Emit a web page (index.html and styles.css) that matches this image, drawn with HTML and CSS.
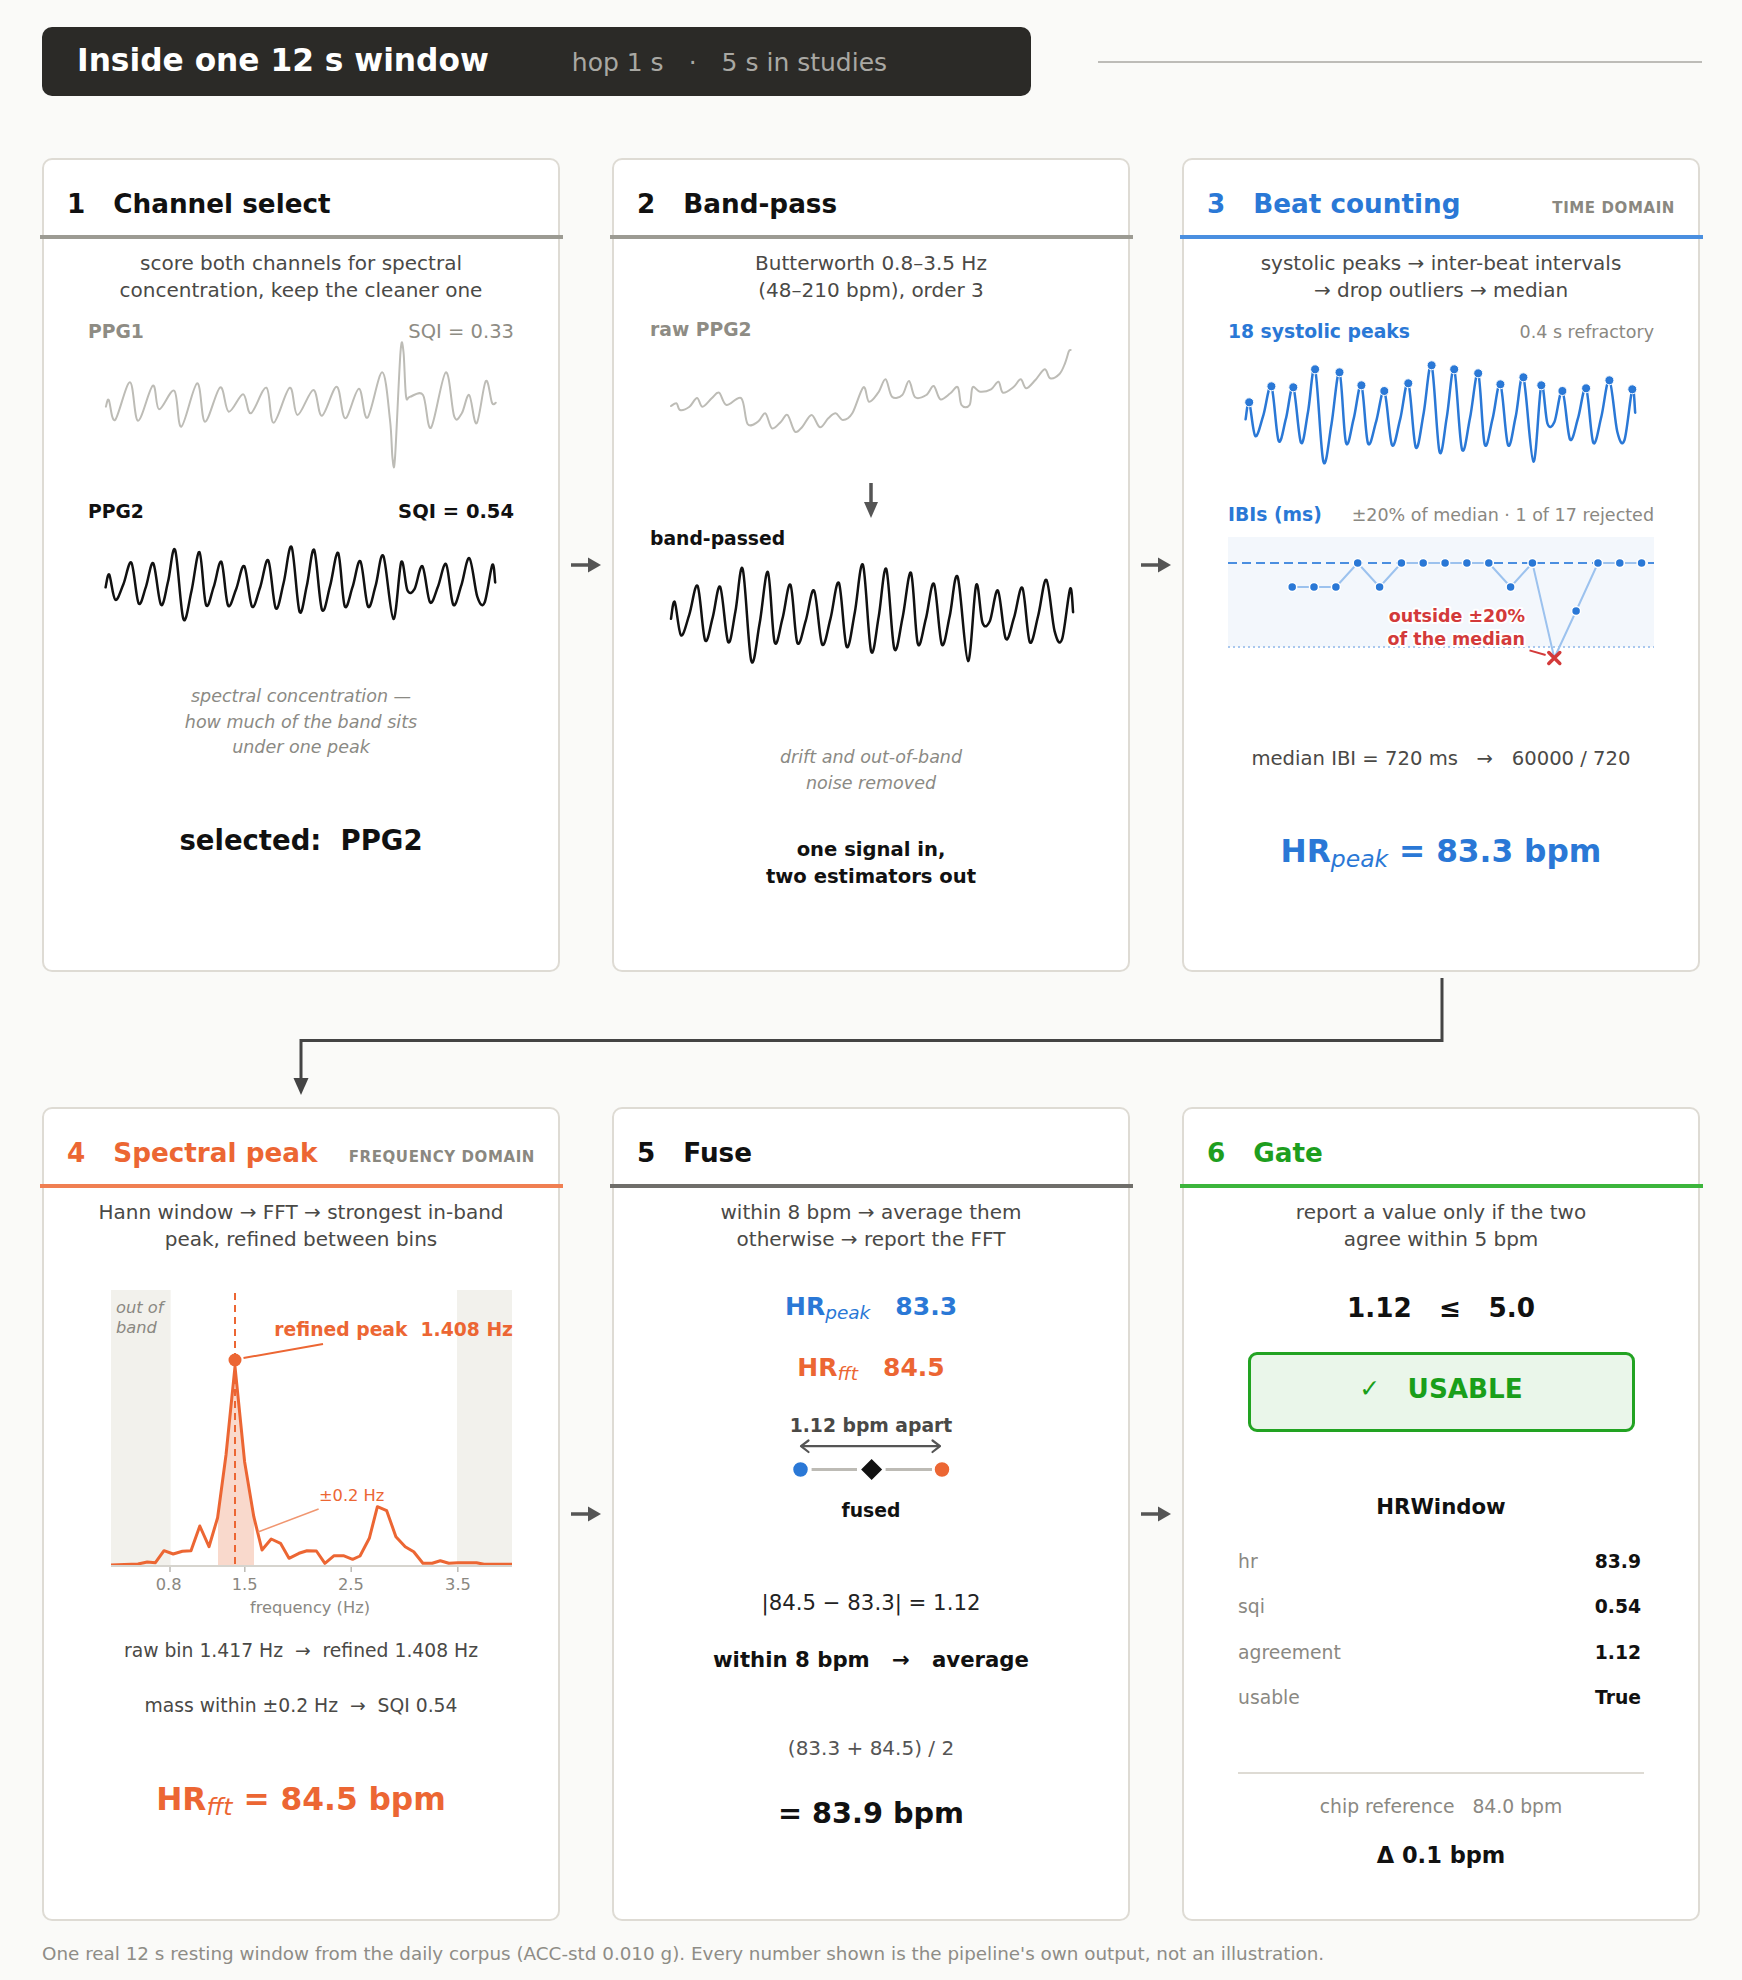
FILE: index.html
```html
<!DOCTYPE html>
<html lang="en">
<head>
<meta charset="utf-8">
<title>Inside one 12 s window</title>
<link rel="stylesheet" href="styles.css">
</head>
<body>
<header class="top">
  <div class="bar">
    <h1 class="title">Inside one 12 s window</h1>
    <span class="sub">hop 1 s<span class="dot">·</span>5 s in studies</span>
  </div>
  <div class="top-line"></div>
</header>

<section class="row row-1">
  <article class="card">
    <div class="head"><span class="num">1</span><span class="name">Channel select</span></div>
    <div class="rule rule-gray"></div>
    <div class="body">
      <p class="desc">score both channels for spectral<br>concentration, keep the cleaner one</p>
      <div class="chan chan-top"><span class="lbl muted">PPG1</span><span class="sqi muted">SQI = 0.33</span></div>
      <svg class="plot" width="426" height="158" viewBox="0 0 426 158"><path id="w-ppg1" class="wave-gray"/></svg>
      <div class="chan"><span class="lbl">PPG2</span><span class="sqi strong">SQI = 0.54</span></div>
      <svg class="plot" width="426" height="161" viewBox="0 0 426 161"><path id="w-ppg2" class="wave-black"/></svg>
      <p class="note">spectral concentration —<br>how much of the band sits<br>under one peak</p>
      <p class="verdict">selected:  PPG2</p>
    </div>
  </article>

  <div class="flow"><svg width="30" height="18" viewBox="0 0 30 18"><line x1="0" y1="9" x2="19" y2="9" class="arr-line"/><polygon points="17,1.5 30,9 17,16.5" class="arr-head"/></svg></div>

  <article class="card">
    <div class="head"><span class="num">2</span><span class="name">Band-pass</span></div>
    <div class="rule rule-gray"></div>
    <div class="body">
      <p class="desc">Butterworth 0.8–3.5 Hz<br>(48–210 bpm), order 3</p>
      <div class="chan chan-raw"><span class="lbl muted">raw PPG2</span></div>
      <svg class="plot" width="426" height="187" viewBox="0 0 426 187">
        <path id="w-raw" class="wave-gray"/>
        <line x1="213" y1="142" x2="213" y2="164" class="arr-line"/>
        <polygon points="206,161 220,161 213,177" class="arr-head"/>
      </svg>
      <div class="chan chan-bp"><span class="lbl">band-passed</span></div>
      <svg class="plot" width="426" height="194" viewBox="0 0 426 194"><path id="w-bp" class="wave-black"/></svg>
      <p class="note note-2">drift and out-of-band<br>noise removed</p>
      <p class="bold-pair">one signal in,<br>two estimators out</p>
    </div>
  </article>

  <div class="flow"><svg width="30" height="18" viewBox="0 0 30 18"><line x1="0" y1="9" x2="19" y2="9" class="arr-line"/><polygon points="17,1.5 30,9 17,16.5" class="arr-head"/></svg></div>

  <article class="card card-blue">
    <div class="head"><span class="num">3</span><span class="name">Beat counting</span><span class="tag">TIME DOMAIN</span></div>
    <div class="rule rule-blue"></div>
    <div class="body">
      <p class="desc">systolic peaks → inter-beat intervals<br>→ drop outliers → median</p>
      <div class="chan chan-top"><span class="lbl blue">18 systolic peaks</span><span class="meta">0.4 s refractory</span></div>
      <svg class="plot" width="426" height="161" viewBox="0 0 426 161">
        <path id="w-blue" class="wave-blue"/>
        <g class="peak-dots">
          <circle cx="21.2" cy="59.3" r="4.5"/><circle cx="43.4" cy="43.3" r="4.5"/><circle cx="65.3" cy="44.3" r="4.5"/>
          <circle cx="87.1" cy="26.3" r="4.5"/><circle cx="111.5" cy="29.3" r="4.5"/><circle cx="133.4" cy="42.3" r="4.5"/>
          <circle cx="156.3" cy="48" r="4.5"/><circle cx="180.3" cy="40.3" r="4.5"/><circle cx="203.6" cy="22.3" r="4.5"/>
          <circle cx="226.2" cy="26.3" r="4.5"/><circle cx="250.2" cy="30.3" r="4.5"/><circle cx="272.4" cy="41.3" r="4.5"/>
          <circle cx="295.4" cy="34.3" r="4.5"/><circle cx="313.3" cy="42.3" r="4.5"/><circle cx="334.4" cy="48" r="4.5"/>
          <circle cx="358.1" cy="45.3" r="4.5"/><circle cx="381.4" cy="37.3" r="4.5"/><circle cx="404.3" cy="46.3" r="4.5"/>
        </g>
      </svg>
      <div class="chan"><span class="lbl blue">IBIs (ms)</span><span class="meta-wide">±20% of median · 1 of 17 rejected</span></div>
      <svg class="plot" width="426" height="219" viewBox="0 0 426 219">
        <rect x="0" y="11" width="426" height="110" class="ibi-bg"/>
        <line x1="0" y1="121" x2="426" y2="121" class="ibi-floor"/>
        <line x1="0" y1="37" x2="426" y2="37" class="ibi-median"/>
        <polyline class="ibi-line" points="64.2,61 86,61 107.9,61 129.7,37 151.6,61 173.4,37 195.2,37 217.1,37 238.9,37 260.8,37 282.6,61 304.4,37 326.3,132 348.1,85 370,37 391.8,37 413.6,37"/>
        <g class="ibi-dots">
          <circle cx="64.2" cy="61" r="4.5"/><circle cx="86" cy="61" r="4.5"/><circle cx="107.9" cy="61" r="4.5"/>
          <circle cx="129.7" cy="37" r="4.5"/><circle cx="151.6" cy="61" r="4.5"/><circle cx="173.4" cy="37" r="4.5"/>
          <circle cx="195.2" cy="37" r="4.5"/><circle cx="217.1" cy="37" r="4.5"/><circle cx="238.9" cy="37" r="4.5"/>
          <circle cx="260.8" cy="37" r="4.5"/><circle cx="282.6" cy="61" r="4.5"/><circle cx="304.4" cy="37" r="4.5"/>
          <circle cx="348.1" cy="85" r="4.5"/><circle cx="370" cy="37" r="4.5"/><circle cx="391.8" cy="37" r="4.5"/>
          <circle cx="413.6" cy="37" r="4.5"/>
        </g>
        <text x="297" y="96" class="t-red">outside ±20%</text>
        <text x="297" y="119" class="t-red">of the median</text>
        <line x1="301.5" y1="124.4" x2="317.6" y2="129" class="red-line"/>
        <path d="M320.8 126.5 L331.8 137.5 M331.8 126.5 L320.8 137.5" class="red-x"/>
      </svg>
      <p class="formula">median IBI = 720 ms   →   60000 / 720</p>
      <p class="hr hr-peak">HR<sub>peak</sub> = 83.3 bpm</p>
    </div>
  </article>
</section>

<svg class="connector" width="1742" height="135" viewBox="0 0 1742 135">
  <path d="M1442 6 V68.5 H301 V108" class="conn-line"/>
  <polygon points="293.5,106 308.5,106 301,123" class="conn-head"/>
</svg>

<section class="row">
  <article class="card card-orange">
    <div class="head"><span class="num">4</span><span class="name">Spectral peak</span><span class="tag">FREQUENCY DOMAIN</span></div>
    <div class="rule rule-orange"></div>
    <div class="body">
      <p class="desc">Hann window → FFT → strongest in-band<br>peak, refined between bins</p>
      <svg class="plot" width="426" height="386" viewBox="0 0 426 386">
        <defs>
          <clipPath id="under">
            <polygon points="23,312 50,311 59.3,309 67.4,309.7 76,297.7 85.2,301 94.4,298.3 103,297.7 111.8,273 121,293.7 129.6,264.7 138,202 147,113.7 156.6,208.7 165.8,263.7 174,297 183.2,286 192.5,290.3 201,305.3 211,300.3 219,297.7 228.4,298 236.9,310.3 246.1,302.7 255.4,302.7 264.6,306.3 272,303 281.3,285.3 289.4,253.7 298.7,257.7 307.9,283.7 317.2,293.7 325.7,298.7 334.9,310.3 344.2,310.3 352.3,307.7 360.8,310.3 370,309.7 388.5,309.7 396,311.3 424,311.3 424,313 23,313"/>
          </clipPath>
        </defs>
        <rect x="23" y="37" width="59.6" height="276" class="oob"/>
        <rect x="369" y="37" width="55" height="276" class="oob"/>
        <text x="28" y="60" class="t-out">out of</text>
        <text x="28" y="80" class="t-out">band</text>
        <rect x="130" y="0" width="36" height="313" class="band" clip-path="url(#under)"/>
        <line x1="147" y1="40" x2="147" y2="313" class="peak-dash"/>
        <polyline class="spec" points="23,312 50,311 59.3,309 67.4,309.7 76,297.7 85.2,301 94.4,298.3 103,297.7 111.8,273 121,293.7 129.6,264.7 138,202 147,113.7 156.6,208.7 165.8,263.7 174,297 183.2,286 192.5,290.3 201,305.3 211,300.3 219,297.7 228.4,298 236.9,310.3 246.1,302.7 255.4,302.7 264.6,306.3 272,303 281.3,285.3 289.4,253.7 298.7,257.7 307.9,283.7 317.2,293.7 325.7,298.7 334.9,310.3 344.2,310.3 352.3,307.7 360.8,310.3 370,309.7 388.5,309.7 396,311.3 424,311.3"/>
        <line x1="23" y1="313" x2="424" y2="313" class="axis"/>
        <line x1="82" y1="314" x2="82" y2="319" class="tick"/>
        <line x1="156.8" y1="314" x2="156.8" y2="319" class="tick"/>
        <line x1="263.2" y1="314" x2="263.2" y2="319" class="tick"/>
        <line x1="369.8" y1="314" x2="369.8" y2="319" class="tick"/>
        <text x="80.7" y="337" class="t-tick">0.8</text>
        <text x="156.6" y="337" class="t-tick">1.5</text>
        <text x="262.8" y="337" class="t-tick">2.5</text>
        <text x="370" y="337" class="t-tick">3.5</text>
        <text x="222" y="360" class="t-tick">frequency (Hz)</text>
        <circle cx="147" cy="107" r="6.5" class="peak-dot"/>
        <line x1="155.5" y1="105" x2="235" y2="91" class="lead"/>
        <text x="425" y="83" class="t-peak" xml:space="preserve">refined peak  1.408 Hz</text>
        <text x="231" y="248" class="t-band">±0.2 Hz</text>
        <line x1="230.6" y1="256" x2="170" y2="279" class="lead-light"/>
      </svg>
      <p class="calc">raw bin 1.417 Hz  →  refined 1.408 Hz</p>
      <p class="calc calc-2">mass within ±0.2 Hz  →  SQI 0.54</p>
      <p class="hr hr-fft">HR<sub>fft</sub> = 84.5 bpm</p>
    </div>
  </article>

  <div class="flow"><svg width="30" height="18" viewBox="0 0 30 18"><line x1="0" y1="9" x2="19" y2="9" class="arr-line"/><polygon points="17,1.5 30,9 17,16.5" class="arr-head"/></svg></div>

  <article class="card">
    <div class="head"><span class="num">5</span><span class="name">Fuse</span></div>
    <div class="rule rule-dark"></div>
    <div class="body">
      <p class="desc">within 8 bpm → average them<br>otherwise → report the FFT</p>
      <p class="est est-peak">HR<sub>peak</sub><span class="ev">83.3</span></p>
      <p class="est est-fft">HR<sub>fft</sub><span class="ev">84.5</span></p>
      <p class="apart">1.12 bpm apart</p>
      <svg class="plot" width="426" height="63" viewBox="0 0 426 63">
        <line x1="143.5" y1="9.2" x2="281.5" y2="9.2" class="dbl"/>
        <path d="M150.5 3.5 L143 9.2 L150.5 15 M274.5 3.5 L282 9.2 L274.5 15" class="dbl"/>
        <line x1="153.6" y1="32.5" x2="199" y2="32.5" class="link"/>
        <line x1="227.6" y1="32.5" x2="274" y2="32.5" class="link"/>
        <circle cx="142.5" cy="32.5" r="8" class="dot-blue"/>
        <circle cx="284" cy="32.5" r="8" class="dot-orange"/>
        <polygon points="213.6,22 224.1,32.5 213.6,43 203.1,32.5" class="diamond"/>
      </svg>
      <p class="fused">fused</p>
      <p class="diff">|84.5 − 83.3| = 1.12</p>
      <p class="decide">within 8 bpm   →   average</p>
      <p class="paren">(83.3 + 84.5) / 2</p>
      <p class="final">= 83.9 bpm</p>
    </div>
  </article>

  <div class="flow"><svg width="30" height="18" viewBox="0 0 30 18"><line x1="0" y1="9" x2="19" y2="9" class="arr-line"/><polygon points="17,1.5 30,9 17,16.5" class="arr-head"/></svg></div>

  <article class="card card-green">
    <div class="head"><span class="num">6</span><span class="name">Gate</span></div>
    <div class="rule rule-green"></div>
    <div class="body">
      <p class="desc">report a value only if the two<br>agree within 5 bpm</p>
      <p class="cmp">1.12   ≤   5.0</p>
      <div class="usable"><span class="check">✓</span>   USABLE</div>
      <p class="objname">HRWindow</p>
      <div class="kv">
        <div class="kv-row"><span class="k">hr</span><span class="v">83.9</span></div>
        <div class="kv-row"><span class="k">sqi</span><span class="v">0.54</span></div>
        <div class="kv-row"><span class="k">agreement</span><span class="v">1.12</span></div>
        <div class="kv-row"><span class="k">usable</span><span class="v">True</span></div>
      </div>
      <div class="sep"></div>
      <p class="chip">chip reference   84.0 bpm</p>
      <p class="delta">Δ 0.1 bpm</p>
    </div>
  </article>
</section>

<p class="foot">One real 12 s resting window from the daily corpus (ACC-std 0.010 g). Every number shown is the pipeline's own output, not an illustration.</p>

<script src="script.js"></script>
</body>
</html>
```

FILE: styles.css
```css
* { margin: 0; padding: 0; box-sizing: border-box; }
html, body { background: #fafaf8; }
body {
  width: 1742px;
  height: 1980px;
  overflow: hidden;
  font-family: "DejaVu Sans", Verdana, sans-serif;
  color: #111;
}

/* top banner */
.top { display: flex; align-items: center; padding: 27px 40px 0 42px; }
.bar {
  flex: none;
  width: 989px;
  height: 69px;
  background: #2b2a27;
  border-radius: 10px;
  display: flex;
  align-items: baseline;
  padding: 15px 0 0 35px;
}
.title { font-size: 31.25px; line-height: 36px; font-weight: bold; color: #fff; white-space: nowrap; }
.sub { font-size: 25px; line-height: 36px; color: #a9a8a3; margin-left: 83px; white-space: nowrap; }
.dot { margin: 0 25px; }
.top-line { flex: 1; height: 2px; background: #bdbcb8; margin-left: 67px; }

/* rows */
.row { display: grid; grid-template-columns: 518px 52px 518px 52px 518px; padding-left: 42px; }
.row-1 { margin-top: 62px; }
.flow { display: flex; align-items: center; justify-content: center; }
.arr-line { stroke: #555; stroke-width: 3.5; }
.arr-head { fill: #555; }

.connector { display: block; }
.conn-line { fill: none; stroke: #444; stroke-width: 3; stroke-linejoin: miter; }
.conn-head { fill: #444; }

/* card */
.card {
  height: 814px;
  background: #fff;
  border: 2px solid #dedbd4;
  border-radius: 10px;
  display: flex;
  flex-direction: column;
}
.head {
  flex: none;
  height: 75px;
  padding: 28.5px 23px 0;
  display: flex;
  align-items: baseline;
  line-height: 30px;
  font-weight: bold;
}
.num, .name { font-size: 26.25px; }
.name { margin-left: 28px; }
.tag { margin-left: auto; font-size: 15px; letter-spacing: 0.6px; color: #8a8880; }
.card-blue .num, .card-blue .name { color: #2a78d6; }
.card-orange .num, .card-orange .name { color: #ec6633; }
.card-green .num, .card-green .name { color: #1e9e1e; }

.rule { flex: none; height: 4px; margin: 0 -5px 0 -4px; }
.rule-gray { background: #9c9b93; }
.rule-blue { background: #4a8fe0; }
.rule-orange { background: #f07f52; }
.rule-dark { background: #6f6e6a; }
.rule-green { background: #3cb53c; }

.body { padding: 0 44px; text-align: center; }
.desc { margin-top: 11px; font-size: 20px; line-height: 27px; color: #4a4946; }

.chan { display: flex; justify-content: space-between; align-items: baseline; line-height: 22px; text-align: left; }
.chan-top { margin-top: 17px; }
.chan-raw { margin-top: 15px; margin-left: -8px; }
.chan-bp { margin-left: -8px; }
.lbl { font-size: 18.75px; font-weight: bold; white-space: nowrap; }
.lbl.muted, .sqi.muted { color: #8e8c84; }
.lbl.blue { color: #2a78d6; }
.sqi { font-size: 19.5px; white-space: nowrap; }
.sqi.strong { font-weight: bold; }
.meta { font-size: 17.5px; color: #8a8882; }
.meta-wide { font-size: 17.5px; color: #8a8882; white-space: nowrap; }

.plot { display: block; overflow: visible; }
.wave-gray { fill: none; stroke: #bdbcb6; stroke-width: 2; stroke-linejoin: round; stroke-linecap: round; }
.wave-black { fill: none; stroke: #111; stroke-width: 2.5; stroke-linejoin: round; stroke-linecap: round; }
.wave-blue { fill: none; stroke: #2a78d6; stroke-width: 2.5; stroke-linejoin: round; stroke-linecap: round; }
.peak-dots circle { fill: #2a78d6; stroke: #fff; stroke-width: 1; }

.note { font-style: italic; font-size: 17.5px; line-height: 25.5px; color: #8b8a84; }
.note-2 { line-height: 26px; }
.verdict { margin-top: 63.5px; font-size: 27.5px; line-height: 32px; font-weight: bold; white-space: pre; }
.bold-pair { margin-top: 40px; font-size: 19.6px; line-height: 27px; font-weight: bold; }

/* IBI chart */
.ibi-bg { fill: #f3f7fc; }
.ibi-floor { stroke: #a9c8ee; stroke-width: 2; stroke-dasharray: 2 3; }
.ibi-median { stroke: #4a8ee0; stroke-width: 2; stroke-dasharray: 9 5; }
.ibi-line { fill: none; stroke: #9cc2ee; stroke-width: 2; stroke-linejoin: round; }
.ibi-dots circle { fill: #2a78d6; stroke: #fff; stroke-width: 1.5; }
.t-red {
  font-size: 17.5px;
  font-weight: bold;
  fill: #d33a3a;
  text-anchor: end;
  stroke: #fff;
  stroke-width: 4px;
  stroke-linejoin: round;
  paint-order: stroke;
}
.red-line { stroke: #d33a3a; stroke-width: 2; }
.red-x { fill: none; stroke: #d33a3a; stroke-width: 3.5; stroke-linecap: round; }

.formula { font-size: 19.6px; line-height: 27px; color: #4a4946; white-space: pre; }
.hr { font-size: 31.25px; line-height: 36px; font-weight: bold; white-space: nowrap; }
.hr sub { font-size: 23.5px; font-style: italic; font-weight: normal; vertical-align: -5px; line-height: 0; }
.hr-peak { margin-top: 61px; color: #2a78d6; }
.hr-fft { margin-top: 63px; color: #ec6633; }

/* spectrum */
.oob { fill: #f2f1ec; }
.band { fill: #f9d9cc; }
.peak-dash { stroke: #ec6633; stroke-width: 2; stroke-dasharray: 7 5; }
.spec { fill: none; stroke: #ec6633; stroke-width: 3; stroke-linejoin: round; }
.axis { stroke: #d6d4ce; stroke-width: 2; }
.tick { stroke: #bcbab4; stroke-width: 1.5; }
.t-tick { font-size: 16.25px; fill: #8a8882; text-anchor: middle; }
.t-out { font-size: 16.25px; font-style: italic; fill: #8a8882; }
.t-peak { font-size: 18.75px; font-weight: bold; fill: #ec6633; text-anchor: end; white-space: pre; }
.t-band { font-size: 16.25px; fill: #ec6633; }
.peak-dot { fill: #ec6633; }
.lead { stroke: #ec6633; stroke-width: 2; }
.lead-light { stroke: #f09670; stroke-width: 1.5; }

.calc { font-size: 18.75px; line-height: 24px; color: #4a4946; white-space: pre; }
.calc-2 { margin-top: 31px; }

/* fuse */
.est { font-size: 25px; line-height: 30px; font-weight: bold; white-space: nowrap; }
.est sub { font-size: 18.5px; font-style: italic; font-weight: normal; vertical-align: -4px; line-height: 0; }
.est .ev { margin-left: 25px; }
.est-peak { margin-top: 38.8px; color: #2a78d6; }
.est-fft { margin-top: 31.7px; color: #ec6633; }
.apart { margin-top: 32px; font-size: 18.75px; line-height: 22px; font-weight: bold; color: #4a4946; }
.dbl { fill: none; stroke: #555; stroke-width: 2.2; stroke-linecap: round; stroke-linejoin: round; }
.link { stroke: #bdbbb5; stroke-width: 3; }
.dot-blue { fill: #2a78d6; stroke: #fff; stroke-width: 1.5; }
.dot-orange { fill: #ec6633; stroke: #fff; stroke-width: 1.5; }
.diamond { fill: #111; }
.fused { font-size: 18.75px; line-height: 22px; font-weight: bold; }
.diff { margin-top: 66.7px; font-size: 21.25px; line-height: 27px; color: #222; }
.decide { margin-top: 30px; font-size: 21.25px; line-height: 27px; font-weight: bold; white-space: pre; }
.paren { margin-top: 62.9px; font-size: 20px; line-height: 24px; color: #555; }
.final { margin-top: 35.6px; font-size: 28.75px; line-height: 34px; font-weight: bold; }

/* gate */
.cmp { margin-top: 39.2px; font-size: 26.25px; line-height: 32px; font-weight: bold; white-space: pre; }
.usable {
  margin: 28px auto 0;
  width: 387px;
  height: 79.4px;
  border: 3px solid #22a322;
  border-radius: 9px;
  background: #eaf6ea;
  display: flex;
  align-items: center;
  justify-content: center;
  padding-bottom: 6px;
  color: #1a9f1a;
  font-size: 26.25px;
  line-height: 32px;
  font-weight: bold;
  white-space: pre;
}
.check { font-size: 25px; font-weight: normal; }
.objname { margin-top: 62.3px; font-size: 21.25px; line-height: 26px; font-weight: bold; }
.kv { margin: 19.2px 13px 0 10px; }
.kv-row { display: flex; justify-content: space-between; height: 45.3px; line-height: 45.3px; font-size: 18.75px; }
.kv-row .k { color: #8a8882; }
.kv-row .v { font-weight: bold; }
.sep { height: 2px; background: #dedbd4; margin: 52px 10px 0; }
.chip { margin-top: 20.5px; font-size: 18.75px; line-height: 24px; color: #8a8882; white-space: pre; }
.delta { margin-top: 22px; font-size: 22.5px; line-height: 28px; font-weight: bold; }

.foot { margin-top: 22px; padding-left: 42px; font-size: 18.33px; line-height: 22px; color: #8e8c86; white-space: nowrap; }
```

FILE: script.js
```js
(function () {
  function fmt(v) { return v.toFixed(1); }
  function smooth(pts) {
    var d = 'M' + fmt(pts[0][0]) + ' ' + fmt(pts[0][1]);
    for (var i = 0; i < pts.length - 1; i++) {
      var p0 = pts[i > 0 ? i - 1 : i];
      var p1 = pts[i];
      var p2 = pts[i + 1];
      var p3 = pts[i + 2 < pts.length ? i + 2 : i + 1];
      var c1x = p1[0] + (p2[0] - p0[0]) / 6, c1y = p1[1] + (p2[1] - p0[1]) / 6;
      var c2x = p2[0] - (p3[0] - p1[0]) / 6, c2y = p2[1] - (p3[1] - p1[1]) / 6;
      d += ' C' + [c1x, c1y, c2x, c2y, p2[0], p2[1]].map(fmt).join(' ');
    }
    return d;
  }
  function set(id, pts) {
    var el = document.getElementById(id);
    if (el) el.setAttribute('d', smooth(pts));
  }

  var peaks = [[21.2,59.3],[43.4,43.3],[65.3,44.3],[87.1,26.3],[111.5,29.3],[133.4,42.3],[156.3,48],[180.3,40.3],[203.6,22.3],[226.2,26.3],[250.2,30.3],[272.4,41.3],[295.4,34.3],[313.3,42.3],[334.4,48],[358.1,45.3],[381.4,37.3],[404.3,46.3]];
  var troughs = [[27.3,93],[50.6,97.7],[73,99.7],[95.4,118.7],[118,99.7],[140,100.3],[164,102],[187.8,104.3],[211.5,108.7],[234,106.3],[256.7,101.3],[280,102],[305.4,118.7],[319.4,80.3],[342,96.3],[365.3,99.7],[389.3,88.7]];

  var blue = [[17.6,76.3]];
  for (var i = 0; i < peaks.length; i++) {
    blue.push(peaks[i]);
    if (i < troughs.length) {
      var t = troughs[i], n = peaks[i + 1];
      blue.push(t);
      if (i === 13) { blue.push([326.5,78.7]); }
      else if (i === 16) { blue.push([396.5,97]); }
      else if (n[0] - t[0] > 10) { blue.push([t[0] + 0.5 * (n[0] - t[0]), t[1] - 0.42 * (t[1] - n[1])]); }
    }
  }
  blue.push([407.2,69.7]);

  set('w-blue', blue);
  set('w-ppg2', blue.map(function (p) { return [p[0], 24 + (p[1] - 22.3) * 0.747]; }));
  set('w-bp', blue.map(function (p) { return [13 + (p[0] - 17.6) * 1.032, 15 + (p[1] - 22.3) * 0.996]; }));

  set('w-ppg1', [[17.9,63.7],[20.8,57],[27.1,77],[41.9,39.3],[50,77.7],[64.8,42.7],[71.1,66.3],[86.3,47.7],[93.3,83.7],[109.2,40.3],[117,78.7],[132.2,44.3],[140.7,68.7],[155.1,51.3],[162.9,70.3],[178.4,44.7],[185.6,79.7],[201.7,44.7],[209.5,72],[225.4,47],[233.9,72.7],[248.7,43.7],[257.2,75.3],[270.9,45.7],[279.4,74.7],[294.2,29.3],[302,77],[304.5,115],[307,115],[312.5,9],[315.5,9],[318,53],[322,53.7],[335,52],[343,84.7],[357.8,29.3],[366.3,73.7],[373.8,70.3],[381.2,52],[388.6,80.3],[397.8,38],[404,59.7],[407.8,59.7]]);

  set('w-raw', [[13,65],[18.6,62.3],[22,69],[31.5,65.7],[39,57],[44.5,65.7],[53.7,57.3],[61,51.7],[68.5,64],[83.3,57.3],[89.6,83],[100,80.7],[107.4,72.3],[114,87.3],[123,80.7],[129.6,74],[137,90.7],[144.4,85.7],[153.6,74],[162,86.3],[170.3,77.3],[177.7,72.3],[185,79],[194.3,72.3],[205.4,46.3],[211,60.7],[220.2,51.7],[227.6,38.3],[234,55.7],[244.3,54],[251,40],[257.2,56.3],[268.3,54],[275.7,45],[282.4,58.3],[292.4,52.3],[299.8,46.3],[303.5,64],[311.6,64],[314.6,46.3],[322,50.7],[333,48.3],[340.5,40.7],[345,51.7],[355.3,46.3],[362.7,38.3],[368.2,47.3],[377.4,39],[386.7,28.3],[392.2,37.3],[401.5,33],[407,22.3],[410.7,10.7],[412.6,9]]);
})();
```
